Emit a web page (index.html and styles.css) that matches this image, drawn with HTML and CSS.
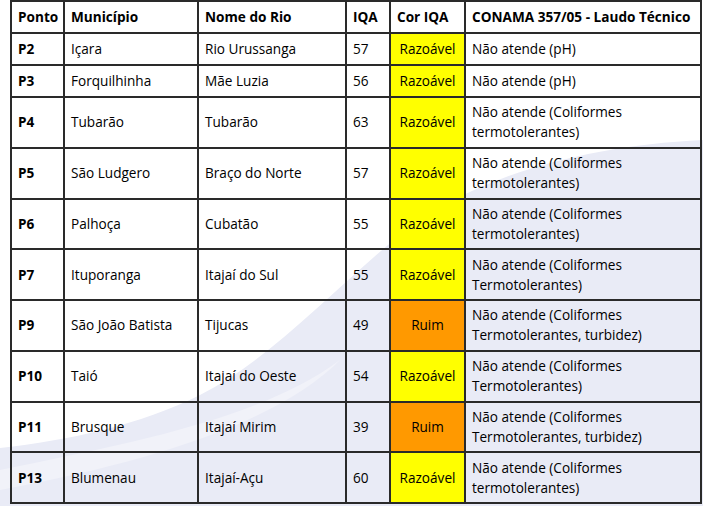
FILE: index.html
```html
<!DOCTYPE html>
<html lang="pt">
<head>
<meta charset="utf-8">
<title>IQA - Pontos de monitoramento</title>
<link rel="stylesheet" href="styles.css">
</head>
<body>
<table class="iqa">
  <colgroup>
    <col class="c-ponto"><col class="c-mun"><col class="c-rio"><col class="c-iqa"><col class="c-cor"><col class="c-laudo">
  </colgroup>
  <thead>
    <tr class="row-h"><th>Ponto</th><th>Município</th><th>Nome do Rio</th><th>IQA</th><th>Cor IQA</th><th>CONAMA 357/05 - Laudo Técnico</th></tr>
  </thead>
  <tbody>
    <tr class="row-s"><th>P2</th><td>Içara</td><td>Rio Urussanga</td><td>57</td><td class="cor razoavel">Razoável</td><td>Não atende (pH)</td></tr>
    <tr class="row-s"><th>P3</th><td>Forquilhinha</td><td>Mãe Luzia</td><td>56</td><td class="cor razoavel">Razoável</td><td>Não atende (pH)</td></tr>
    <tr class="row-l"><th>P4</th><td>Tubarão</td><td>Tubarão</td><td>63</td><td class="cor razoavel">Razoável</td><td>Não atende (Coliformes<br>termotolerantes)</td></tr>
    <tr class="row-l"><th>P5</th><td>São Ludgero</td><td>Braço do Norte</td><td>57</td><td class="cor razoavel">Razoável</td><td>Não atende (Coliformes<br>termotolerantes)</td></tr>
    <tr class="row-l"><th>P6</th><td>Palhoça</td><td>Cubatão</td><td>55</td><td class="cor razoavel">Razoável</td><td>Não atende (Coliformes<br>termotolerantes)</td></tr>
    <tr class="row-l"><th>P7</th><td>Ituporanga</td><td>Itajaí do Sul</td><td>55</td><td class="cor razoavel">Razoável</td><td>Não atende (Coliformes<br>Termotolerantes)</td></tr>
    <tr class="row-l"><th>P9</th><td>São João Batista</td><td>Tijucas</td><td>49</td><td class="cor ruim">Ruim</td><td>Não atende (Coliformes<br>Termotolerantes, turbidez)</td></tr>
    <tr class="row-l"><th>P10</th><td>Taió</td><td>Itajaí do Oeste</td><td>54</td><td class="cor razoavel">Razoável</td><td>Não atende (Coliformes<br>Termotolerantes)</td></tr>
    <tr class="row-l"><th>P11</th><td>Brusque</td><td>Itajaí Mirim</td><td>39</td><td class="cor ruim">Ruim</td><td>Não atende (Coliformes<br>Termotolerantes, turbidez)</td></tr>
    <tr class="row-l"><th>P13</th><td>Blumenau</td><td>Itajaí-Açu</td><td>60</td><td class="cor razoavel">Razoável</td><td>Não atende (Coliformes<br>termotolerantes)</td></tr>
  </tbody>
</table>
</body>
</html>
```
FILE: styles.css
```css
html, body {
  margin: 0;
  padding: 0;
}
body {
  width: 703px;
  height: 506px;
  overflow: hidden;
  background-color: #e9ebf6;
  background-image: url("data:image/svg+xml,%3Csvg xmlns='http://www.w3.org/2000/svg' width='703' height='506' viewBox='0 0 703 506'%3E%3Cpath d='M0 0 H703 V140 C580 146 470 178 400 235 C330 292 270 360 200 395 C140 425 70 440 0 448 Z' fill='%23ffffff'/%3E%3Cpath d='M0 470 C120 445 260 420 340 360 C280 420 160 460 0 490 Z' fill='%23f1f2f9'/%3E%3C/svg%3E");
  background-repeat: no-repeat;
  font-family: "Open Sans", "Liberation Sans", sans-serif;
  font-size: 13.6px;
  color: #000;
}
.iqa {
  border-collapse: collapse;
  margin: 0 0 0 10px;
  width: 690px;
  table-layout: fixed;
}
.c-ponto { width: 53px; }
.c-mun { width: 134px; }
.c-rio { width: 148px; }
.c-iqa { width: 44px; }
.c-cor { width: 75px; }
.c-laudo { width: 236px; }
.iqa th,
.iqa td {
  border: 2px solid #2a2a2a;
  padding: 3px 6px;
  line-height: 20px;
  text-align: left;
  vertical-align: middle;
  white-space: nowrap;
}
.iqa th {
  font-weight: 700;
}
.row-h {
  height: 32px;
}
.row-s {
  height: 32px;
}
.row-l {
  height: 50.75px;
}
.iqa td.cor {
  text-align: center;
  padding-left: 2px;
  padding-right: 2px;
}
.razoavel {
  background: #ffff00;
}
.ruim {
  background: #ff9900;
}
```
